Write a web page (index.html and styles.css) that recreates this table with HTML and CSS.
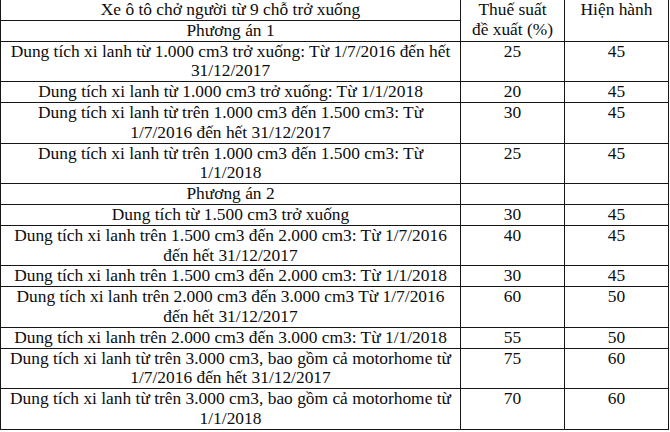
FILE: index.html
```html
<!DOCTYPE html>
<html lang="vi">
<head>
<meta charset="utf-8">
<title>Thuế suất</title>
<link rel="stylesheet" href="styles.css">
</head>
<body>
<table class="tax">
  <colgroup>
    <col class="c-name">
    <col class="c-num">
    <col class="c-num">
  </colgroup>
  <tr>
    <td>Xe ô tô chở người từ 9 chỗ trở xuống</td>
    <td rowspan="2"><span class="nw">Thuế suất</span> <span class="nw">đề xuất (%)</span></td>
    <td rowspan="2">Hiện hành</td>
  </tr>
  <tr><td>Phương án 1</td></tr>
  <tr><td>Dung tích xi lanh từ 1.000 cm3 trở xuống: Từ 1/7/2016 đến hết 31/12/2017</td><td>25</td><td>45</td></tr>
  <tr><td>Dung tích xi lanh từ 1.000 cm3 trở xuống: Từ 1/1/2018</td><td>20</td><td>45</td></tr>
  <tr><td>Dung tích xi lanh từ trên 1.000 cm3 đến 1.500 cm3: Từ 1/7/2016 đến hết 31/12/2017</td><td>30</td><td>45</td></tr>
  <tr><td>Dung tích xi lanh từ trên 1.000 cm3 đến 1.500 cm3: Từ 1/1/2018</td><td>25</td><td>45</td></tr>
  <tr><td>Phương án 2</td><td></td><td></td></tr>
  <tr><td>Dung tích từ 1.500 cm3 trở xuống</td><td>30</td><td>45</td></tr>
  <tr><td>Dung tích xi lanh trên 1.500 cm3 đến 2.000 cm3: Từ 1/7/2016 đến hết 31/12/2017</td><td>40</td><td>45</td></tr>
  <tr><td>Dung tích xi lanh trên 1.500 cm3 đến 2.000 cm3: Từ 1/1/2018</td><td>30</td><td>45</td></tr>
  <tr><td>Dung tích xi lanh trên 2.000 cm3 đến 3.000 cm3 Từ 1/7/2016 đến hết 31/12/2017</td><td>60</td><td>50</td></tr>
  <tr><td>Dung tích xi lanh trên 2.000 cm3 đến 3.000 cm3: Từ 1/1/2018</td><td>55</td><td>50</td></tr>
  <tr><td>Dung tích xi lanh từ trên 3.000 cm3, bao gồm cả motorhome từ 1/7/2016 đến hết 31/12/2017</td><td>75</td><td>60</td></tr>
  <tr><td>Dung tích xi lanh từ trên 3.000 cm3, bao gồm cả motorhome từ 1/1/2018</td><td>70</td><td>60</td></tr>
</table>
</body>
</html>
```
FILE: styles.css
```css
html, body {
  margin: 0;
  padding: 0;
  background: #ffffff;
}
.tax {
  border-collapse: collapse;
  table-layout: fixed;
  width: 669px;
  margin-top: -1px;
  font-family: "Liberation Serif", "Times New Roman", serif;
  font-size: 17.4px;
  line-height: 19.8px;
  color: #0d0d0d;
}
.c-name { width: 460px; }
.c-num { width: 104px; }
.tax td {
  border: 1px solid #161616;
  padding: 0 6px;
  text-align: center;
  vertical-align: top;
}
.nw {
  white-space: nowrap;
}
```
